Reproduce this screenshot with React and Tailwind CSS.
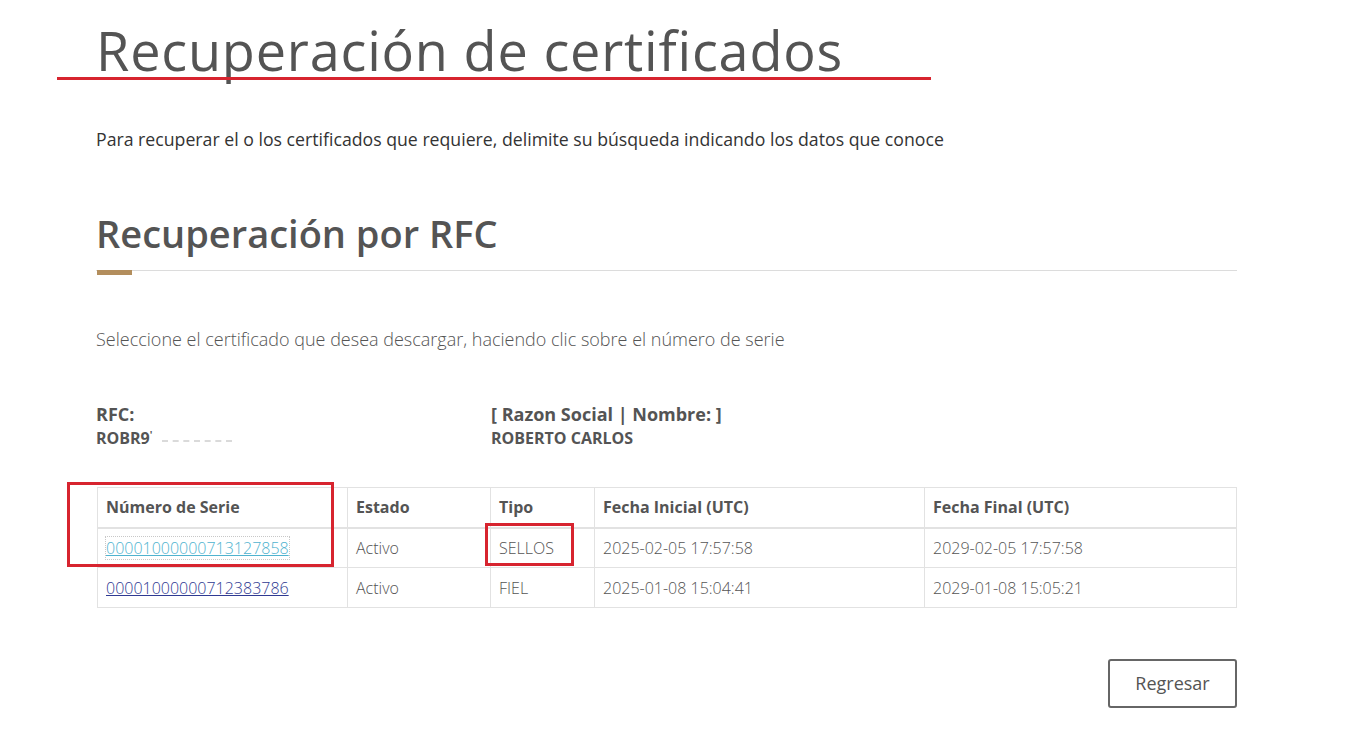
import React from 'react';

const ROWS = [
    { serie: '00001000000713127858', estado: 'Activo', tipo: 'SELLOS', inicio: '2025-02-05 17:57:58', fin: '2029-02-05 17:57:58', focused: true },
    { serie: '00001000000712383786', estado: 'Activo', tipo: 'FIEL', inicio: '2025-01-08 15:04:41', fin: '2029-01-08 15:05:21' },
];

export default function App() {
    return (
        <div className="relative min-h-[732px] bg-white text-[#545454]" style={{ fontFamily: '"Open Sans", "Liberation Sans", sans-serif' }}>
            <div className="pl-[96px] w-[1237px]">
                {/* Title */}
                <h1 className="pt-[12px] text-[54px] leading-[76px] tracking-[0.8px] font-medium text-[#545454]">
                    Recuperación de certificados
                </h1>
                <p className="mt-[39px] text-[17.7px] leading-[24px] text-[#333]">
                    Para recuperar el o los certificados que requiere, delimite su búsqueda indicando los datos que conoce
                </p>

                {/* Section */}
                <h2 className="mt-[57px] text-[38px] leading-[50px] font-semibold text-[#545454]">
                    Recuperación por RFC
                </h2>
                <div className="mt-[12px] relative h-[6px]">
                    <div className="border-t border-[#dcdcdc] w-full" />
                    <div className="absolute left-[1px] top-0 w-[35px] h-[5px] bg-[#b38e5d]" />
                </div>

                <p className="mt-[51px] text-[18px] leading-[24px] font-light text-[#545454]">
                    Seleccione el certificado que desea descargar, haciendo clic sobre el número de serie
                </p>

                {/* RFC / nombre */}
                <div className="mt-[51px] grid grid-cols-[395px_1fr] font-bold text-[#545454]">
                    <div>
                        <div className="text-[18px] leading-[24px]">RFC:</div>
                        <div className="text-[16px] leading-[24px] flex items-center">
                            ROBR9<span className="text-[10px] -mt-[6px]">'</span>
                            <span className="ml-[10px] mt-[6px] w-[70px] border-t-[2px] border-dashed border-[#dadada]" />
                        </div>
                    </div>
                    <div>
                        <div className="text-[18px] leading-[24px]">[ Razon Social | Nombre: ]</div>
                        <div className="text-[16px] leading-[24px]">ROBERTO CARLOS</div>
                    </div>
                </div>

                {/* Table */}
                <table className="mt-[37px] ml-[1px] w-[1140px] border-collapse text-[16px]">
                    <colgroup>
                        <col className="w-[250px]" />
                        <col className="w-[143px]" />
                        <col className="w-[104px]" />
                        <col className="w-[330px]" />
                        <col />
                    </colgroup>
                    <thead>
                        <tr className="h-[40px] border-b-2 border-[#e2e2e2]">
                            {['Número de Serie', 'Estado', 'Tipo', 'Fecha Inicial (UTC)', 'Fecha Final (UTC)'].map(h => (
                                <th key={h} className="border border-[#e2e2e2] px-[8px] text-left font-bold text-[#545454]">{h}</th>
                            ))}
                        </tr>
                    </thead>
                    <tbody>
                        {ROWS.map(r => (
                            <tr key={r.serie} className="h-[40px] font-light text-[#545454]">
                                <td className="border border-[#e2e2e2] px-[8px]">
                                    <a href="#" className={r.focused ? 'underline text-[#4fb3cf] outline-1 outline-dotted outline-[#c8c8c8]' : 'underline text-[#2f3a92]'}>
                                        {r.serie}
                                    </a>
                                </td>
                                <td className="border border-[#e2e2e2] px-[8px]">{r.estado}</td>
                                <td className="border border-[#e2e2e2] px-[8px]">{r.tipo}</td>
                                <td className="border border-[#e2e2e2] px-[8px]">{r.inicio}</td>
                                <td className="border border-[#e2e2e2] px-[8px]">{r.fin}</td>
                            </tr>
                        ))}
                    </tbody>
                </table>

                <div className="mt-[51px] flex justify-end">
                    <button className="w-[129px] h-[49px] border-2 border-[#666] rounded-[3px] text-[18px] text-[#545454] bg-white">
                        Regresar
                    </button>
                </div>
            </div>

            {/* Annotations drawn over the screenshot */}
            <div className="absolute left-[57px] top-[77px] w-[874px] h-[3px] bg-[#d7242f]" />
            <div className="absolute left-[67px] top-[482px] w-[267px] h-[85px] border-[3px] border-[#d7242f]" />
            <div className="absolute left-[485px] top-[523px] w-[89px] h-[43px] border-[3px] border-[#d7242f]" />
        </div>
    );
}
